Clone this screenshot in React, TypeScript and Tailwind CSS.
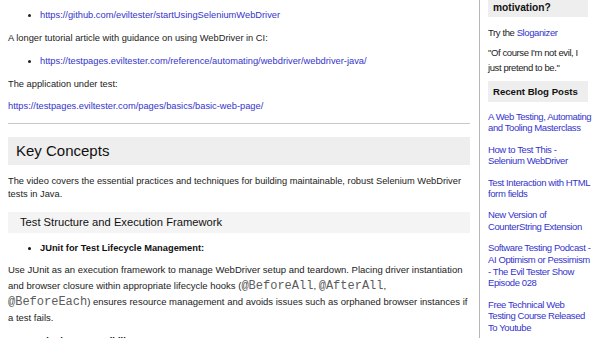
const posts = [
  "A Web Testing, Automating and Tooling Masterclass",
  "How to Test This - Selenium WebDriver",
  "Test Interaction with HTML form fields",
  "New Version of CounterString Extension",
  "Software Testing Podcast - AI Optimism or Pessimism - The Evil Tester Show Episode 028",
  "Free Technical Web Testing Course Released To Youtube",
];

function Code({ children }: { children: string }) {
  return <code className="font-['Liberation_Mono',monospace] text-[12px] text-[#5c5c5c]">{children}</code>;
}

export default function App() {
  return (
    <div className="flex h-[338px] w-[600px] overflow-hidden bg-white font-['Liberation_Sans',Arial,sans-serif] text-[#222]">
      {/* main column */}
      <main className="w-[480px] shrink-0 border-r border-[#b5b5b5] pl-2 pr-[11px] text-[9.3px] leading-[13px]">
        <ul className="mt-[9px] list-disc pl-8">
          <li>
            <a className="text-[#3434cc]">https://github.com/eviltester/startUsingSeleniumWebDriver</a>
          </li>
        </ul>
        <p className="mt-[10px]">A longer tutorial article with guidance on using WebDriver in CI:</p>
        <ul className="mt-[10px] list-disc pl-8">
          <li>
            <a className="text-[#3434cc]">https://testpages.eviltester.com/reference/automating/webdriver/webdriver-java/</a>
          </li>
        </ul>
        <p className="mt-[10px]">The application under test:</p>
        <p className="mt-[9px]">
          <a className="text-[#3434cc]">https://testpages.eviltester.com/pages/basics/basic-web-page/</a>
        </p>
        <hr className="mr-[-2px] mt-[10px] border-t border-[#c8c8c8]" />

        <h2 className="mr-[-2px] mt-[13px] bg-[#eeeeee] px-2 py-[4px] text-[15px] leading-[20px] text-[#111]">
          Key Concepts
        </h2>
        <p className="mt-[10px]">
          The video covers the essential practices and techniques for building maintainable, robust Selenium WebDriver
          tests in Java.
        </p>

        <h3 className="mr-[-2px] mt-[11px] bg-[#f4f4f4] px-3 py-[4px] text-[11.2px] leading-[13px] text-[#111]">
          Test Structure and Execution Framework
        </h3>
        <ul className="mt-[9px] list-disc pl-8">
          <li className="font-bold text-[#111]">JUnit for Test Lifecycle Management:</li>
        </ul>
        <p className="mt-[7px] text-[9.5px] leading-[16px]">
          Use JUnit as an execution framework to manage WebDriver setup and teardown. Placing driver instantiation
          and browser closure within appropriate lifecycle hooks (<Code>@BeforeAll</Code>, <Code>@AfterAll</Code>,{" "}
          <Code>@BeforeEach</Code>) ensures resource management and avoids issues such as orphaned browser instances if
          a test fails.
        </p>
        <ul className="mt-[9px] list-disc pl-8">
          <li className="font-bold text-[#111]">Single Responsibility:</li>
        </ul>
      </main>

      {/* sidebar */}
      <aside className="flex-1 pl-2 pr-[8px] text-[9.5px] leading-[11.7px] tracking-[-0.4px]">
        <h3 className="mr-1 bg-[#eeeeee] px-[5px] pt-[2px] pb-[3px] text-[10.2px] font-bold leading-[12px] tracking-normal text-[#111]">
          motivation?
        </h3>
        <p className="mt-[10px]">
          Try the <a className="text-[#3434cc]">Sloganizer</a>
        </p>
        <p className="mt-[6px] leading-[15px]">"Of course I'm not evil, I just pretend to be."</p>
        <h3 className="mr-1 mt-[6px] bg-[#eeeeee] px-[5px] py-[4px] text-[9.6px] font-bold leading-[13px] tracking-normal text-[#111]">
          Recent Blog Posts
        </h3>
        <div className="mt-[9px] flex flex-col gap-[9.5px]">
          {posts.map((p) => (
            <a key={p} className="text-[#3434cc]">
              {p}
            </a>
          ))}
        </div>
      </aside>
    </div>
  );
}
